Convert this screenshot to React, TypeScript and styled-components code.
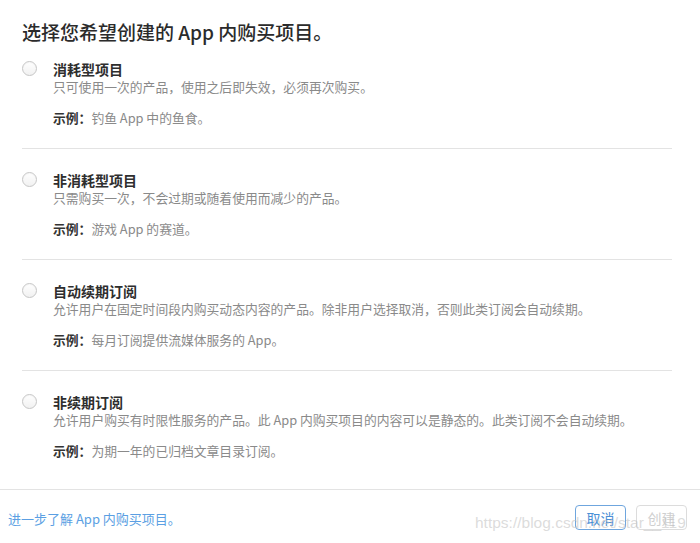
import React from "react";
import styled, { createGlobalStyle } from "styled-components";

const Global = createGlobalStyle`
  html, body { margin: 0; padding: 0; background: #fff; }
  body {
    font-family: "Noto Sans CJK SC", "Noto Sans", sans-serif;
    color: #333;
    -webkit-font-smoothing: antialiased;
  }
`;

const Page = styled.div`
  position: relative;
  width: 700px;
  height: 543px;
  display: flex;
  flex-direction: column;
  overflow: hidden;
`;

const Body = styled.div`
  padding: 21px 28px 7px 22px;
  flex: 1;
`;

const Heading = styled.h1`
  margin: 0;
  font-size: 19px;
  line-height: 22px;
  font-weight: 500;
  color: #2b2b2b;
`;

const List = styled.div`
  display: flex;
  flex-direction: column;
`;

const Item = styled.label`
  display: flex;
  align-items: flex-start;
  gap: 16px;
  padding: 22px 0 21px;
  border-bottom: 1px solid #e3e3e3;
  cursor: pointer;
  &:first-child { padding-top: 17px; }
  &:last-child { border-bottom: none; padding-bottom: 22px; }
`;

const Radio = styled.span`
  flex: none;
  width: 13px;
  height: 13px;
  margin-top: 1px;
  border-radius: 50%;
  border: 1px solid #c6c6c6;
  background: linear-gradient(#ffffff, #f1f1f1);
  box-shadow: inset 0 1px 1px rgba(0,0,0,0.04);
`;

const Texts = styled.div`
  display: flex;
  flex-direction: column;
`;

const Title = styled.div`
  font-size: 14px;
  line-height: 18px;
  font-weight: 700;
  color: #2e2e2e;
`;

const Desc = styled.div`
  font-size: 12.8px;
  line-height: 18px;
  color: #8a8a8a;
`;

const Example = styled.div`
  margin-top: 13px;
  font-size: 12.8px;
  line-height: 18px;
  color: #8a8a8a;
  b { color: #333; font-weight: 700; }
`;

const Footer = styled.div`
  height: 53px;
  border-top: 1px solid #e3e3e3;
  display: flex;
  align-items: center;
  justify-content: space-between;
  padding: 0 13px 0 8px;
`;

const Link = styled.a`
  font-size: 13px;
  color: #5b9fe3;
  text-decoration: none;
  margin-top: 4px;
`;

const Buttons = styled.div`
  display: flex;
  gap: 10px;
  margin-top: 2px;
`;

const Button = styled.button<{ $disabled?: boolean }>`
  width: 51px;
  height: 25px;
  border-radius: 4px;
  font-family: inherit;
  font-size: 14px;
  line-height: 1;
  padding: 0;
  background: #fff;
  border: 1px solid ${(p) => (p.$disabled ? "#dcdcdc" : "#6fa6de")};
  color: ${(p) => (p.$disabled ? "#cfcfcf" : "#4b8fd6")};
`;

const Watermark = styled.div`
  position: absolute;
  left: 475px;
  top: 514px;
  font-family: "Liberation Sans", Arial, sans-serif;
  font-size: 15.5px;
  color: rgba(190, 190, 190, 0.55);
  pointer-events: none;
  white-space: nowrap;
`;

const items = [
  {
    title: "消耗型项目",
    desc: "只可使用一次的产品，使用之后即失效，必须再次购买。",
    ex: "钓鱼 App 中的鱼食。",
  },
  {
    title: "非消耗型项目",
    desc: "只需购买一次，不会过期或随着使用而减少的产品。",
    ex: "游戏 App 的赛道。",
  },
  {
    title: "自动续期订阅",
    desc: "允许用户在固定时间段内购买动态内容的产品。除非用户选择取消，否则此类订阅会自动续期。",
    ex: "每月订阅提供流媒体服务的 App。",
  },
  {
    title: "非续期订阅",
    desc: "允许用户购买有时限性服务的产品。此 App 内购买项目的内容可以是静态的。此类订阅不会自动续期。",
    ex: "为期一年的已归档文章目录订阅。",
  },
];

export default function App() {
  return (
    <>
      <Global />
      <Page>
        <Body>
          <Heading>选择您希望创建的 App 内购买项目。</Heading>
          <List>
            {items.map((it) => (
              <Item key={it.title}>
                <Radio />
                <Texts>
                  <Title>{it.title}</Title>
                  <Desc>{it.desc}</Desc>
                  <Example>
                    <b>示例：</b>
                    {it.ex}
                  </Example>
                </Texts>
              </Item>
            ))}
          </List>
        </Body>
        <Footer>
          <Link href="#">进一步了解 App 内购买项目。</Link>
          <Buttons>
            <Button>取消</Button>
            <Button $disabled>创建</Button>
          </Buttons>
        </Footer>
        <Watermark>https://blog.csdn.net/star__119</Watermark>
      </Page>
    </>
  );
}
